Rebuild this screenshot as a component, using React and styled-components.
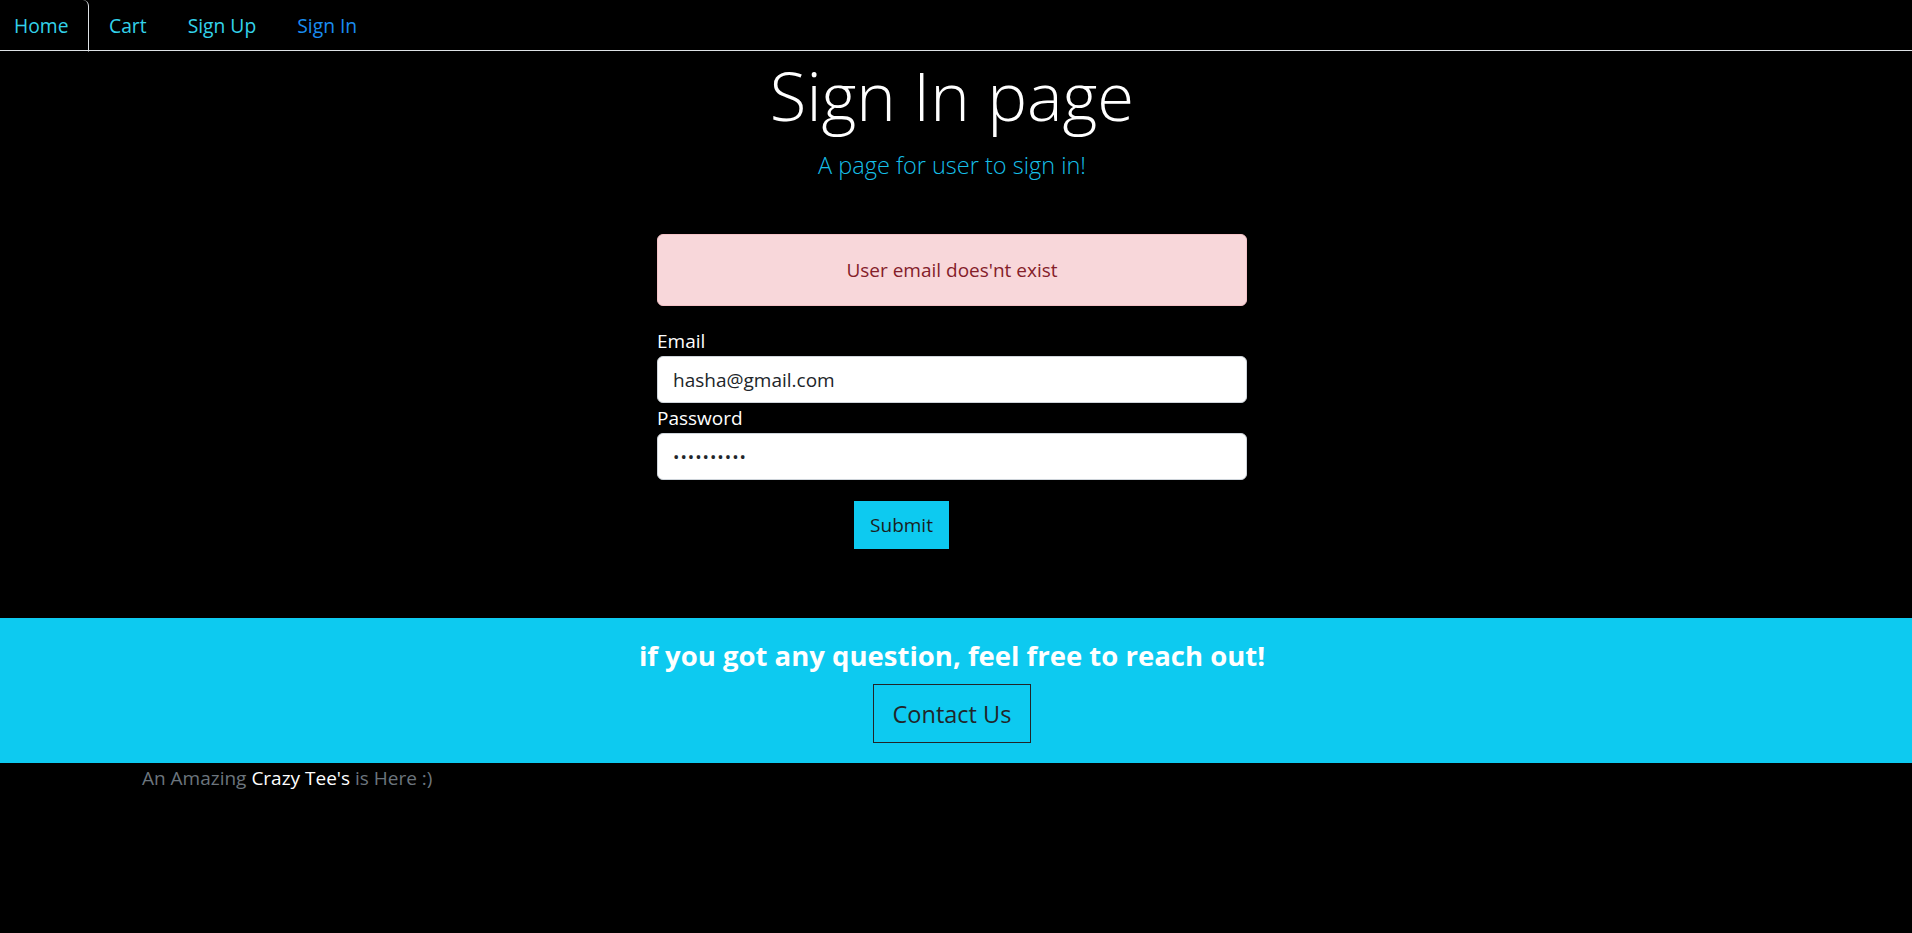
import React from 'react';
import styled, { createGlobalStyle } from 'styled-components';

const GlobalStyle = createGlobalStyle`
  body {
    margin: 0;
    background: #000;
    font-family: "Open Sans", "Noto Sans", sans-serif;
    font-size: 19px;
    color: #fff;
  }
`;

const Nav = styled.ul`
  display: flex;
  margin: 0;
  padding: 0;
  list-style: none;
  height: 50px;
  border-bottom: 1px solid #dee2e6;
`;

const NavItem = styled.li`
  display: flex;
  align-items: center;
  height: 50px;
  margin-bottom: -1px;
  padding: 0 20.5px;
  font-size: 19.3px;
  color: ${p => p.current ? '#1a8cf0' : '#33d2ea'};
  ${p => p.active && `
    padding: 0 19px 0 14px;
    border-right: 1px solid #dee2e6;
    border-bottom: 1px solid #000;
    border-top-right-radius: 6px;
    height: 51px;
  `}
`;

const Main = styled.section`
  display: flex;
  flex-direction: column;
  align-items: center;
  padding-right: 8px;
`;

const Title = styled.h1`
  margin: 2px 0 10px;
  font-size: 67px;
  font-weight: 300;
  line-height: 84px;
  color: #fff;
`;

const Lead = styled.p`
  margin: 0 0 50px;
  font-size: 23.5px;
  font-weight: 300;
  line-height: 37px;
  color: #16bfe8;
`;

const Form = styled.form`
  width: 590px;
  display: flex;
  flex-direction: column;
`;

const Alert = styled.div`
  box-sizing: border-box;
  height: 72px;
  display: flex;
  align-items: center;
  justify-content: center;
  margin-bottom: 20px;
  background: #f8d7da;
  border: 1px solid #f5c2c7;
  border-radius: 6px;
  color: #842029;
`;

const Label = styled.label`
  line-height: 30px;
  color: #fff;
`;

const Input = styled.input`
  box-sizing: border-box;
  height: 47px;
  width: 100%;
  padding: 0 15px;
  border: 1px solid #ced4da;
  border-radius: 6px;
  background: #fff;
  color: #212529;
  font-family: inherit;
  font-size: 19px;
  ${p => p.type === 'password' && 'letter-spacing: 1px; font-size: 17px;'}
`;

const Submit = styled.button`
  align-self: flex-start;
  margin: 21px 0 0 197px;
  width: 95px;
  height: 48px;
  border: none;
  border-radius: 0;
  background: #0dcaf0;
  color: #1a1e21;
  font-family: inherit;
  font-size: 19px;
`;

const Band = styled.footer`
  margin-top: 69px;
  background: #0dcaf0;
  padding: 20px 8px 20px 0;
  display: flex;
  flex-direction: column;
  align-items: center;
`;

const BandTitle = styled.h4`
  margin: 0 0 10px;
  font-size: 27.5px;
  font-weight: 700;
  line-height: 36px;
  color: #fff;
`;

const ContactButton = styled.button`
  box-sizing: border-box;
  height: 59px;
  padding: 0 19px;
  background: transparent;
  border: 1px solid #212529;
  border-radius: 0;
  color: #212529;
  font-family: inherit;
  font-size: 23.5px;
`;

const Tagline = styled.p`
  margin: 0 0 0 142px;
  line-height: 30px;
  color: #6c757d;
`;

const Brand = styled.span`
  color: #fff;
`;

export default function App() {
  return (
    <>
      <GlobalStyle />
      <Nav>
        <NavItem active>Home</NavItem>
        <NavItem>Cart</NavItem>
        <NavItem>Sign Up</NavItem>
        <NavItem current>Sign In</NavItem>
      </Nav>
      <Main>
        <Title>Sign In page</Title>
        <Lead>A page for user to sign in!</Lead>
        <Form onSubmit={e => e.preventDefault()}>
          <Alert>User email does'nt exist</Alert>
          <Label>Email</Label>
          <Input type="email" defaultValue="hasha@gmail.com" />
          <Label>Password</Label>
          <Input type="password" defaultValue="1234567890" />
          <Submit type="submit">Submit</Submit>
        </Form>
      </Main>
      <Band>
        <BandTitle>if you got any question, feel free to reach out!</BandTitle>
        <ContactButton>Contact Us</ContactButton>
      </Band>
      <Tagline>An Amazing <Brand>Crazy Tee's</Brand> is Here :)</Tagline>
    </>
  );
}
